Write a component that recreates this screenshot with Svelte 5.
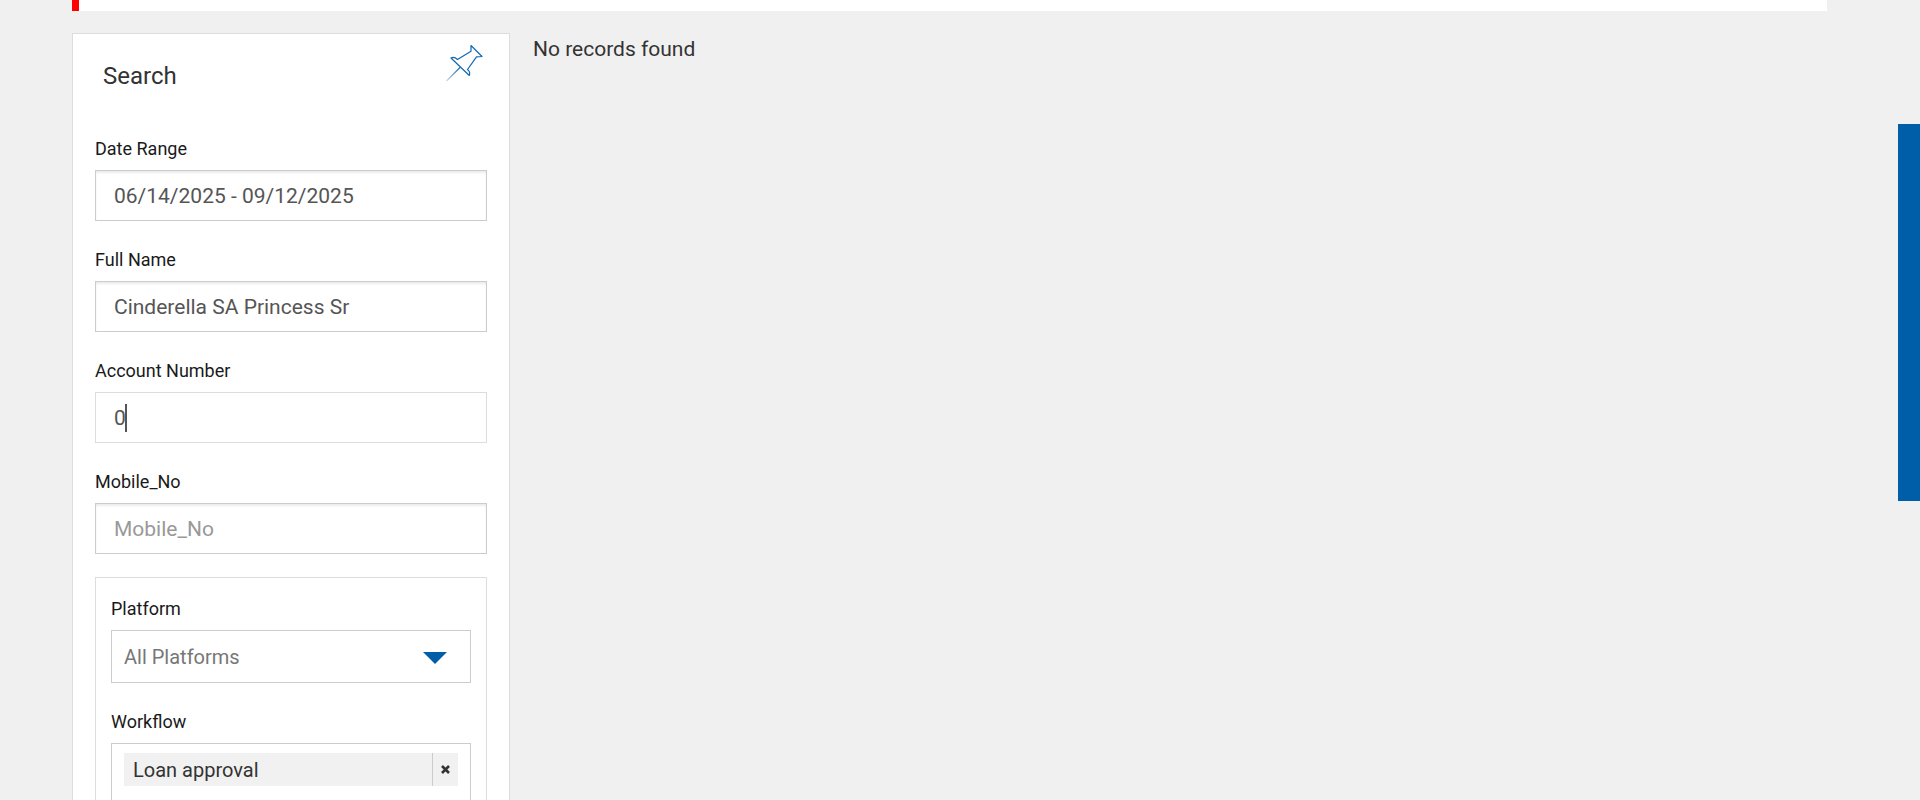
<script>
  let dateRange = $state('06/14/2025 - 09/12/2025');
  let fullName = $state('Cinderella SA Princess Sr');
  let account = $state('0');
  let mobile = $state('');
  let platform = $state('all');
  let workflows = $state(['Loan approval']);

  function removeWorkflow(name) {
    workflows = workflows.filter((item) => item !== name);
  }
</script>

<div class="page">
  <div class="notice"></div>

  <div class="columns">
    <form class="panel">
      <header class="panel-head">
        <h2>Search</h2>
        <button type="button" class="pin" aria-label="Pin search panel">
          <svg width="40" height="40" viewBox="0 0 40 40" fill="none">
            <defs>
              <linearGradient id="needle" x1="17" y1="25" x2="3" y2="39" gradientUnits="userSpaceOnUse">
                <stop offset="0" stop-color="#1b6cb0" />
                <stop offset="1" stop-color="#1b6cb0" stop-opacity="0.2" />
              </linearGradient>
            </defs>
            <path d="M28 2.5 L39 13.5 L33.5 13.8 L24.5 26.5 C26.5 28 27 30.5 26.3 32.5 L8 15 C10 13.8 12 14.2 14.5 16.5 L28 8.3 Z" stroke="#1268b0" stroke-width="1.2" stroke-linejoin="round" />
            <path d="M17 24.5 L3.5 38" stroke="url(#needle)" stroke-width="1.2" />
          </svg>
        </button>
      </header>

      <div class="field">
        <label for="date-range">Date Range</label>
        <input id="date-range" type="text" bind:value={dateRange} />
      </div>
      <div class="field">
        <label for="full-name">Full Name</label>
        <input id="full-name" type="text" bind:value={fullName} />
      </div>
      <div class="field">
        <label for="account">Account Number</label>
        <div class="active">
          <input id="account" type="text" bind:value={account} />
          <span class="caret"></span>
        </div>
      </div>
      <div class="field">
        <label for="mobile">Mobile_No</label>
        <input id="mobile" type="text" placeholder="Mobile_No" bind:value={mobile} />
      </div>

      <div class="group">
        <div class="field">
          <label for="platform">Platform</label>
          <div class="select">
            <select id="platform" bind:value={platform}>
              <option value="all">All Platforms</option>
            </select>
            <svg class="arrow" width="24" height="12" viewBox="0 0 24 12"><path d="M0 0H24L12 12Z" fill="#005da8" /></svg>
          </div>
        </div>
        <div class="field">
          <span class="label" id="workflow-label">Workflow</span>
          <div class="tags" role="group" aria-labelledby="workflow-label">
            {#each workflows as name (name)}
              <div class="tag">
                <span class="tag-name">{name}</span>
                <button type="button" aria-label="Remove {name}" onclick={() => removeWorkflow(name)}>
                  <svg width="9" height="9" viewBox="0 0 9 9"><path d="M1 1L8 8M8 1L1 8" stroke="#333" stroke-width="2.6" /></svg>
                </button>
              </div>
            {/each}
          </div>
        </div>
      </div>
    </form>

    <main>
      <p>No records found</p>
    </main>
  </div>

  <aside class="side-tab"></aside>
</div>

<style>
  :global(body) {
    background: #f0f0f0;
  }
  .page {
    box-sizing: border-box;
    height: 100vh;
    overflow: hidden;
    padding: 0 93px 0 72px;
    font-family: Roboto, sans-serif;
    font-size: 21px;
    color: #333;
  }
  .page * {
    box-sizing: border-box;
  }
  .notice {
    height: 11px;
    background: #fff;
    border-left: 7px solid #f00;
  }
  .columns {
    display: flex;
    align-items: flex-start;
    gap: 23px;
    margin-top: 22px;
  }
  .panel {
    flex: 0 0 438px;
    padding: 9px 22px 24px;
    background: #fff;
    border: 1px solid #ddd;
  }
  .panel-head {
    display: flex;
    justify-content: space-between;
    align-items: flex-start;
    height: 90px;
    padding-left: 8px;
  }
  h2 {
    margin: 18px 0 0;
    font-size: 24px;
    line-height: 30px;
    font-weight: 400;
  }
  .pin {
    width: 40px;
    height: 40px;
    margin-right: 4px;
    padding: 0;
    border: 0;
    background: none;
  }
  .pin svg {
    display: block;
    width: 40px;
    height: 40px;
  }
  .field {
    display: flex;
    flex-direction: column;
    margin-bottom: 23px;
  }
  label,
  .label {
    margin-bottom: 7px;
    padding-top: 2px;
    font-size: 18px;
    line-height: 28px;
    color: #1a1a1a;
  }
  input {
    display: block;
    width: 100%;
    height: 51px;
    padding: 0 18px;
    border: 1px solid #ccc;
    border-radius: 0;
    background: #fff;
    box-shadow: inset 0 2px 2px rgba(0, 0, 0, 0.08);
    font: inherit;
    color: #555;
    outline: 0;
  }
  input::placeholder {
    color: #999;
    opacity: 1;
  }
  .active {
    position: relative;
  }
  .active input {
    border-color: #ddd;
    box-shadow: none;
  }
  .caret {
    position: absolute;
    top: 12px;
    left: 30px;
    width: 2px;
    height: 28px;
    background: #555;
  }
  .group {
    padding: 15px;
    border: 1px solid #ddd;
  }
  .select {
    position: relative;
  }
  select {
    display: block;
    appearance: none;
    width: 100%;
    height: 53px;
    padding: 0 12px;
    border: 1px solid #ccc;
    border-radius: 0;
    background: #fff;
    font: inherit;
    font-size: 20px;
    color: #777;
  }
  .arrow {
    position: absolute;
    top: 22px;
    right: 24px;
    pointer-events: none;
  }
  .tags {
    min-height: 100px;
    padding: 9px 12px;
    border: 1px solid #ccc;
  }
  .tag {
    display: flex;
    height: 33px;
    background: #f1f1f1;
  }
  .tag-name {
    flex: 1;
    padding-left: 9px;
    font-size: 20px;
    line-height: 34px;
  }
  .tag button {
    display: flex;
    align-items: center;
    justify-content: center;
    width: 26px;
    padding: 0;
    border: 0;
    border-left: 1px solid #ccc;
    background: none;
  }
  main {
    flex: 1;
  }
  p {
    margin: 0;
    line-height: 32px;
  }
  .side-tab {
    position: fixed;
    top: 124px;
    right: 0;
    width: 22px;
    height: 377px;
    background: #005da8;
  }
</style>
